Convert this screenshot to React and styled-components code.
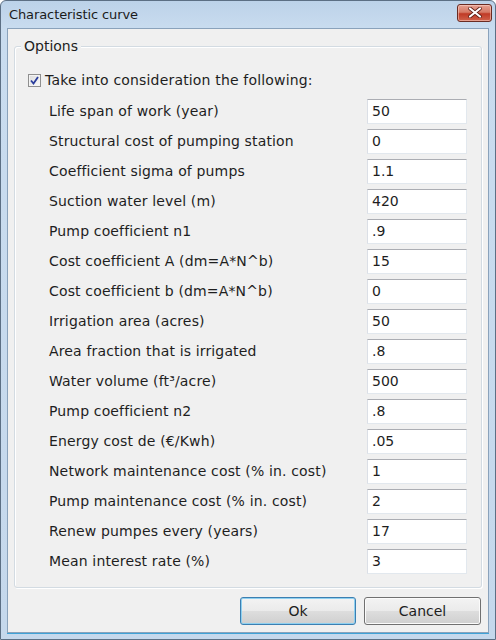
import React from "react";
import styled, { createGlobalStyle } from "styled-components";

const Global = createGlobalStyle`
  html, body { margin: 0; padding: 0; background: #ffffff; }
  body { font-family: "DejaVu Sans", Verdana, sans-serif; }
  * { box-sizing: border-box; }
`;

const Window = styled.div`
  width: 496px;
  height: 640px;
  display: flex;
  flex-direction: column;
  border: 1px solid #5c6f84;
  border-radius: 6px 6px 0 0;
  background: linear-gradient(180deg, #bcd2e9 0px, #c9dcef 28px, #c5d8ec 100%);
  padding: 0 6px 6px 6px;
`;

const TitleBar = styled.div`
  height: 28px;
  display: flex;
  align-items: center;
  justify-content: space-between;
  padding: 0 0 0 2px;
`;

const Title = styled.span`
  font-family: "DejaVu Sans", sans-serif;
  font-size: 13px;
  color: #1b1b1b;
  letter-spacing: -0.1px;
`;

const CloseButton = styled.div`
  width: 35px;
  height: 18px;
  margin-top: -4px;
  margin-right: -3px;
  border: 1px solid #6a2b22;
  border-radius: 3px;
  background: linear-gradient(180deg, #e6a091 0%, #d67a66 45%, #c03a26 55%, #d0634c 100%);
  box-shadow: inset 0 0 0 1px rgba(255, 220, 210, 0.5);
  display: flex;
  align-items: center;
  justify-content: center;
`;

const Client = styled.div`
  flex: 1;
  background: #f0f0f0;
  border: 1px solid #8aa2bb;
  display: flex;
  flex-direction: column;
  padding: 0 6px 7px 6px;
  box-shadow: 0 1px 0 #3fa2d6;
`;

const GroupBox = styled.div`
  margin-top: 17px;
  height: 542px;
  border: 1px solid #d3dbe2;
  border-radius: 3px;
  box-shadow: inset 1px 1px 0 #ffffff, 1px 1px 0 #ffffff;
  display: flex;
  flex-direction: column;
  padding: 0 14px 0 12px;
`;

const GroupLabel = styled.span`
  align-self: flex-start;
  margin: -9px 0 0 -6px;
  padding: 0 3px;
  background: #f0f0f0;
  font-size: 14px;
  line-height: 16px;
  color: #1e1e1e;
`;

const CheckRow = styled.label`
  display: flex;
  align-items: center;
  height: 20px;
  margin-top: 16px;
  margin-bottom: 6px;
  font-size: 14px;
  letter-spacing: 0.17px;
  color: #1e1e1e;
`;

const CheckBox = styled.span`
  width: 13px;
  height: 13px;
  margin-left: 1px;
  margin-right: 4px;
  border: 1px solid #8f8f8f;
  background: linear-gradient(135deg, #dcdcdc, #fafafa);
  box-shadow: inset 0 0 0 1px #f4f4f4;
  display: flex;
  align-items: center;
  justify-content: center;
`;

const Row = styled.div`
  display: flex;
  align-items: center;
  justify-content: space-between;
  height: 30px;
  padding-left: 22px;
`;

const Label = styled.span`
  font-size: 14px;
  letter-spacing: 0.15px;
  color: #1e1e1e;
  white-space: nowrap;
`;

const Input = styled.div`
  width: 100px;
  height: 25px;
  background: #ffffff;
  border: 1px solid #e2e8ee;
  border-top-color: #abadb3;
  border-left-color: #dbdfe6;
  display: flex;
  align-items: center;
  padding-left: 4px;
  font-size: 14px;
  color: #1e1e1e;
`;

const ButtonRow = styled.div`
  display: flex;
  justify-content: flex-end;
  gap: 8px;
  margin-top: 9px;
  padding-right: 1px;
`;

const Button = styled.div`
  width: ${(p) => p.$w}px;
  height: 28px;
  border-radius: 3px;
  border: 1px solid ${(p) => (p.$default ? "#3c7fb1" : "#707070")};
  background: linear-gradient(180deg, #f3f3f3 0%, #ebebeb 48%, #dddddd 52%, #cfcfcf 100%);
  box-shadow: inset 0 0 0 1px ${(p) => (p.$default ? "#8ed0f0" : "#fbfbfb")};
  display: flex;
  align-items: center;
  justify-content: center;
  font-size: 14px;
  color: #1e1e1e;
`;

const rows = [
  ["Life span of work (year)", "50"],
  ["Structural cost of pumping station", "0"],
  ["Coefficient sigma of pumps", "1.1"],
  ["Suction water level (m)", "420"],
  ["Pump coefficient n1", ".9"],
  ["Cost coefficient A (dm=A*N^b)", "15"],
  ["Cost coefficient b (dm=A*N^b)", "0"],
  ["Irrigation area (acres)", "50"],
  ["Area fraction that is irrigated", ".8"],
  ["Water volume (ft³/acre)", "500"],
  ["Pump coefficient n2", ".8"],
  ["Energy cost de (€/Kwh)", ".05"],
  ["Network maintenance cost (% in. cost)", "1"],
  ["Pump maintenance cost (% in. cost)", "2"],
  ["Renew pumpes every (years)", "17"],
  ["Mean interest rate (%)", "3"],
];

export default function App() {
  return (
    <>
      <Global />
      <Window>
        <TitleBar>
          <Title>Characteristic curve</Title>
          <CloseButton>
            <svg width="14" height="11" viewBox="0 0 14 11">
              <path d="M2 1.5 L12 9.5 M12 1.5 L2 9.5" stroke="#5a1a12" strokeWidth="3.6" strokeLinecap="round" />
              <path d="M2 1.5 L12 9.5 M12 1.5 L2 9.5" stroke="#ffffff" strokeWidth="2.2" strokeLinecap="round" />
            </svg>
          </CloseButton>
        </TitleBar>
        <Client>
          <GroupBox>
            <GroupLabel>Options</GroupLabel>
            <CheckRow>
              <CheckBox>
                <svg width="9" height="9" viewBox="0 0 9 9">
                  <path d="M1 4.5 L3.5 7.5 L8 1" fill="none" stroke="#2a3d9c" strokeWidth="1.8" />
                </svg>
              </CheckBox>
              Take into consideration the following:
            </CheckRow>
            {rows.map(([l, v]) => (
              <Row key={l}>
                <Label>{l}</Label>
                <Input>{v}</Input>
              </Row>
            ))}
          </GroupBox>
          <ButtonRow>
            <Button $w={116} $default>Ok</Button>
            <Button $w={117}>Cancel</Button>
          </ButtonRow>
        </Client>
      </Window>
    </>
  );
}
